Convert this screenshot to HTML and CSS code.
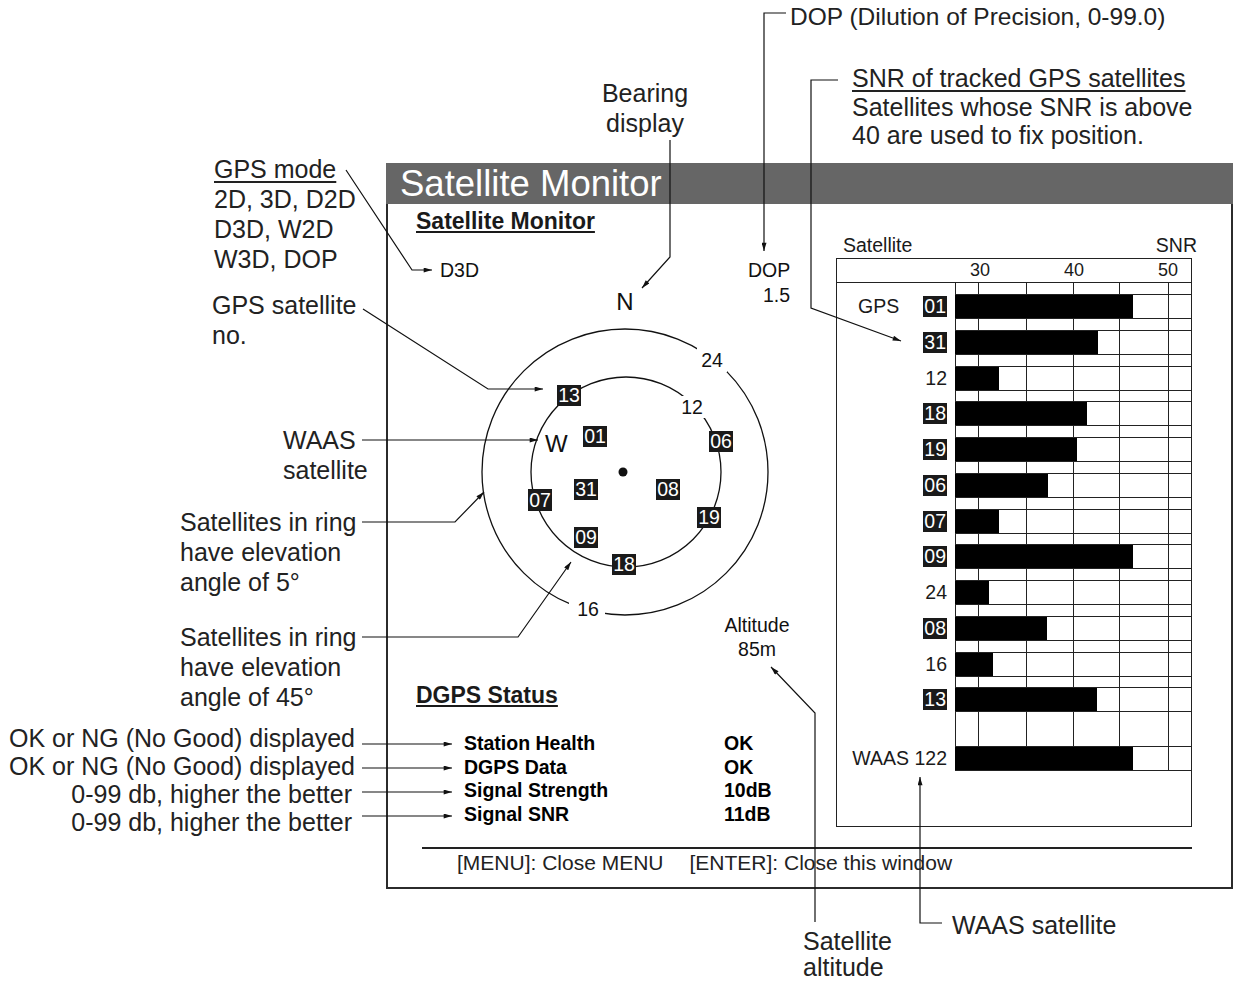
FILE: index.html
```html
<!DOCTYPE html>
<html lang="en">
<head>
    <meta charset="UTF-8">
    <title>Satellite Monitor</title>
    <link rel="stylesheet" href="styles.css">
</head>
<body>
<div class="sheet">
    <div class="window">
        <div class="titlebar">Satellite Monitor</div>
        <div class="win-body">
            <section class="left">
                <h2 class="subtitle">Satellite Monitor</h2>
                <svg class="scope" viewBox="388 234 448 448" xmlns="http://www.w3.org/2000/svg">
                    <g class="scr">
                        <text x="440" y="277">D3D</text>
                        <text x="625" y="310" text-anchor="middle" class="big">N</text>
                        <text x="748" y="277">DOP</text>
                        <text x="790" y="302" text-anchor="end">1.5</text>
                        <text x="757" y="632" text-anchor="middle">Altitude</text>
                        <text x="757" y="656" text-anchor="middle">85m</text>
                    </g>
                    <circle cx="625" cy="472" r="143" class="ring"/>
                    <circle cx="626" cy="472" r="95" class="ring"/>
                    <circle cx="623" cy="472" r="4.5" fill="#111"/>
                    <!-- plain satellites sit in gaps of the rings -->
                    <rect x="697" y="348" width="30" height="24" fill="#fff"/>
                    <rect x="569" y="598" width="36" height="24" fill="#fff"/>
                    <rect x="677" y="396" width="30" height="22" fill="#fff"/>
                    <g class="scr">
                        <text x="712" y="367" text-anchor="middle">24</text>
                        <text x="588" y="616" text-anchor="middle">16</text>
                        <text x="692" y="414" text-anchor="middle">12</text>
                        <text x="545" y="452" class="big">W</text>
                    </g>
                    <g class="sats">
                        <rect x="557" y="385" width="24" height="21"/><text x="569" y="402">13</text>
                        <rect x="583" y="426" width="24" height="21"/><text x="595" y="443">01</text>
                        <rect x="709" y="431" width="24" height="21"/><text x="721" y="448">06</text>
                        <rect x="528" y="489" width="24" height="22"/><text x="540" y="507">07</text>
                        <rect x="574" y="479" width="24" height="21"/><text x="586" y="496">31</text>
                        <rect x="656" y="479" width="24" height="21"/><text x="668" y="496">08</text>
                        <rect x="697" y="507" width="24" height="21"/><text x="709" y="524">19</text>
                        <rect x="574" y="527" width="24" height="21"/><text x="586" y="544">09</text>
                        <rect x="612" y="554" width="24" height="21"/><text x="624" y="571">18</text>
                    </g>
                </svg>
                <h2 class="subtitle dgps-title">DGPS Status</h2>
                <dl class="dgps">
                    <dt>Station Health</dt><dd>OK</dd>
                    <dt>DGPS Data</dt><dd>OK</dd>
                    <dt>Signal Strength</dt><dd>10dB</dd>
                    <dt>Signal SNR</dt><dd>11dB</dd>
                </dl>
            </section>

            <section class="right">
                <div class="chart-head"><span>Satellite</span><span>SNR</span></div>
                <div class="chart">
                    <div class="scale"><span>30</span><span>40</span><span>50</span></div>
                    <div class="plot">
                        <div class="row"><div class="sat"><span class="sys">GPS</span><b>01</b></div><div class="track"><i class="bar" style="width:178px"></i></div></div>
                        <div class="row"><div class="sat"><b>31</b></div><div class="track"><i class="bar" style="width:143px"></i></div></div>
                        <div class="row"><div class="sat">12</div><div class="track"><i class="bar" style="width:44px"></i></div></div>
                        <div class="row"><div class="sat"><b>18</b></div><div class="track"><i class="bar" style="width:132px"></i></div></div>
                        <div class="row"><div class="sat"><b>19</b></div><div class="track"><i class="bar" style="width:122px"></i></div></div>
                        <div class="row"><div class="sat"><b>06</b></div><div class="track"><i class="bar" style="width:93px"></i></div></div>
                        <div class="row"><div class="sat"><b>07</b></div><div class="track"><i class="bar" style="width:44px"></i></div></div>
                        <div class="row"><div class="sat"><b>09</b></div><div class="track"><i class="bar" style="width:178px"></i></div></div>
                        <div class="row"><div class="sat">24</div><div class="track"><i class="bar" style="width:34px"></i></div></div>
                        <div class="row"><div class="sat"><b>08</b></div><div class="track"><i class="bar" style="width:92px"></i></div></div>
                        <div class="row"><div class="sat">16</div><div class="track"><i class="bar" style="width:38px"></i></div></div>
                        <div class="row"><div class="sat"><b>13</b></div><div class="track"><i class="bar" style="width:142px"></i></div></div>
                        <div class="row waas"><div class="sat">WAAS 122</div><div class="track"><i class="bar" style="width:178px"></i></div></div>
                    </div>
                </div>
            </section>

            <div class="keys">[MENU]: Close MENU<span>[ENTER]: Close this window</span></div>
        </div>
    </div>

    <!-- callouts -->
    <div class="note n-mode"><u>GPS mode</u><br>2D, 3D, D2D<br>D3D, W2D<br>W3D, DOP</div>
    <div class="note n-satno">GPS satellite<br>no.</div>
    <div class="note n-waas">WAAS<br>satellite</div>
    <div class="note n-ring5">Satellites in ring<br>have elevation<br>angle of 5°</div>
    <div class="note n-ring45">Satellites in ring<br>have elevation<br>angle of 45°</div>
    <div class="note n-status">
        <div>OK or NG (No Good) displayed</div>
        <div>OK or NG (No Good) displayed</div>
        <div class="db">0-99 db, higher the better</div>
        <div class="db">0-99 db, higher the better</div>
    </div>
    <div class="note n-bearing">Bearing<br>display</div>
    <div class="note n-dop">DOP (Dilution of Precision, 0-99.0)</div>
    <div class="note n-snr"><u>SNR of tracked GPS satellites</u><br>Satellites whose SNR is above<br>40 are used to fix position.</div>
    <div class="note n-alt">Satellite<br>altitude</div>
    <div class="note n-waas2">WAAS satellite</div>

    <svg class="leaders" viewBox="0 0 1234 982" xmlns="http://www.w3.org/2000/svg">
        <defs>
            <marker id="tip" viewBox="0 0 10 6" refX="10" refY="3" markerWidth="10" markerHeight="5" markerUnits="userSpaceOnUse" orient="auto">
                <path d="M0,0 L10,3 L0,6 z" fill="#111"/>
            </marker>
        </defs>
        <g fill="none" stroke="#111" stroke-width="1.2" marker-end="url(#tip)">
            <path d="M346 170 L412 270 L432 270"/>
            <path d="M363 309 L488 389 L543 389"/>
            <path d="M362 440 L538 440"/>
            <path d="M362 522 L455 522 L484 492"/>
            <path d="M362 637 L518 637 L571 562"/>
            <path d="M362 744 L452 744"/>
            <path d="M362 768 L452 768"/>
            <path d="M362 792 L452 792"/>
            <path d="M362 816 L452 816"/>
            <path d="M670 140 L670 257 L642 288"/>
            <path d="M786 13 L764 13 L764 251"/>
            <path d="M838 80 L811 80 L811 308 L901 341"/>
            <path d="M815 922 L815 713 L771 667"/>
            <path d="M942 923 L920 923 L920 777"/>
        </g>
    </svg>
</div>
</body>
</html>
```

FILE: styles.css
```css
body {
    margin: 0;
    background: #fff;
    font-family: "Liberation Sans", Arial, sans-serif;
    color: #1a1a1a;
}
.sheet {
    position: relative;
    width: 1234px;
    height: 982px;
    padding: 163px 0 0 386px;
    box-sizing: border-box;
    overflow: hidden;
}

/* the monitor window */
.window {
    width: 847px;
    box-sizing: border-box;
    border: 2px solid #2b2b2b;
    border-top: 0;
}
.titlebar {
    margin: 0 -2px;
    height: 41px;
    padding-left: 14px;
    background: #666;
    color: #fff;
    font-size: 36.5px;
    line-height: 42px;
}
.win-body {
    display: grid;
    grid-template-columns: 448px 356px 1fr;
}
.subtitle {
    margin: 4px 0 0 28px;
    font-size: 23px;
    line-height: 26px;
    font-weight: bold;
    text-decoration: underline;
    text-underline-offset: 2px;
}
.dgps-title {
    margin-top: 0;
}
.scope {
    display: block;
    width: 448px;
    height: 448px;
}
.scope .scr {
    font-family: "Liberation Sans", Arial, sans-serif;
    font-size: 19.5px;
    fill: #111;
}
.scope .big {
    font-size: 24px;
}
.scope .ring {
    fill: none;
    stroke: #111;
    stroke-width: 1.3;
}
.scope .sats rect {
    fill: #1a1a1a;
}
.scope .sats text {
    fill: #fff;
    font-family: "Liberation Sans", Arial, sans-serif;
    font-size: 19.5px;
    text-anchor: middle;
}
.dgps {
    display: grid;
    grid-template-columns: 260px auto;
    margin: 24px 0 0 76px;
    font-size: 19.5px;
    line-height: 23.7px;
    font-weight: bold;
    color: #000;
}
.dgps dt,
.dgps dd {
    margin: 0;
}

/* SNR chart */
.right {
    padding-top: 31px;
}
.chart-head {
    display: flex;
    justify-content: space-between;
    padding-left: 7px;
    margin-right: -5px;
    font-size: 19.5px;
    line-height: 20px;
}
.chart {
    margin-top: 3px;
    height: 569px;
    box-sizing: border-box;
    border: 1px solid #222;
}
.scale {
    display: flex;
    gap: 48px;
    height: 23px;
    padding-left: 120px;
    border-bottom: 1px solid #222;
    font-size: 18px;
    line-height: 23px;
}
.scale span {
    width: 46px;
    text-align: center;
}
.plot {
    display: flex;
    flex-direction: column;
    gap: 10.75px;
    padding-top: 11px;
    background-image:
        linear-gradient(#222, #222), linear-gradient(#222, #222), linear-gradient(#222, #222),
        linear-gradient(#222, #222), linear-gradient(#222, #222), linear-gradient(#222, #222);
    background-size: 1px 510px;
    background-repeat: no-repeat;
    background-position: 118px 0, 141px 0, 189px 0, 236px 0, 282px 0, 331px 0;
}
.row {
    display: grid;
    grid-template-columns: 118px 1fr;
    height: 25px;
}
.row.waas {
    margin-top: 23px;
}
.sat {
    display: flex;
    align-items: center;
    justify-content: flex-end;
    padding-right: 8px;
    font-size: 19.5px;
}
.sat b {
    font-weight: normal;
    background: #1a1a1a;
    color: #fff;
    line-height: 21px;
    padding: 0 1px;
}
.sat .sys {
    margin-right: auto;
    padding-left: 21px;
}
.track {
    display: flex;
    border-top: 1px solid #222;
    border-bottom: 1px solid #222;
}
.bar {
    background: #000;
}

.keys {
    grid-column: 1 / 3;
    margin: 20px 0 0 34px;
    padding: 2px 0 12px 35px;
    border-top: 2px solid #222;
    font-size: 21px;
    line-height: 24px;
    color: #222;
}
.keys span {
    margin-left: 26px;
}

/* callouts around the window */
.note {
    position: absolute;
    font-size: 25px;
    line-height: 30px;
    color: #222;
    white-space: nowrap;
}
.note u {
    text-underline-offset: 3px;
}
.n-mode { left: 214px; top: 154px; }
.n-satno { left: 212px; top: 290px; }
.n-waas { left: 283px; top: 425px; }
.n-ring5 { left: 180px; top: 507px; }
.n-ring45 { left: 180px; top: 622px; }
.n-status {
    right: 879px;
    top: 724px;
    line-height: 28px;
    text-align: right;
}
.n-status .db {
    padding-right: 3px;
}
.n-bearing {
    left: 600px;
    top: 78px;
    width: 90px;
    text-align: center;
}
.n-dop { left: 790px; top: 2px; font-size: 24.5px; }
.n-snr {
    left: 852px;
    top: 64px;
    line-height: 28.5px;
}
.n-alt {
    left: 803px;
    top: 928px;
    line-height: 26px;
}
.n-waas2 { left: 952px; top: 910px; }

.leaders {
    position: absolute;
    left: 0;
    top: 0;
    width: 1234px;
    height: 982px;
    pointer-events: none;
}
```
